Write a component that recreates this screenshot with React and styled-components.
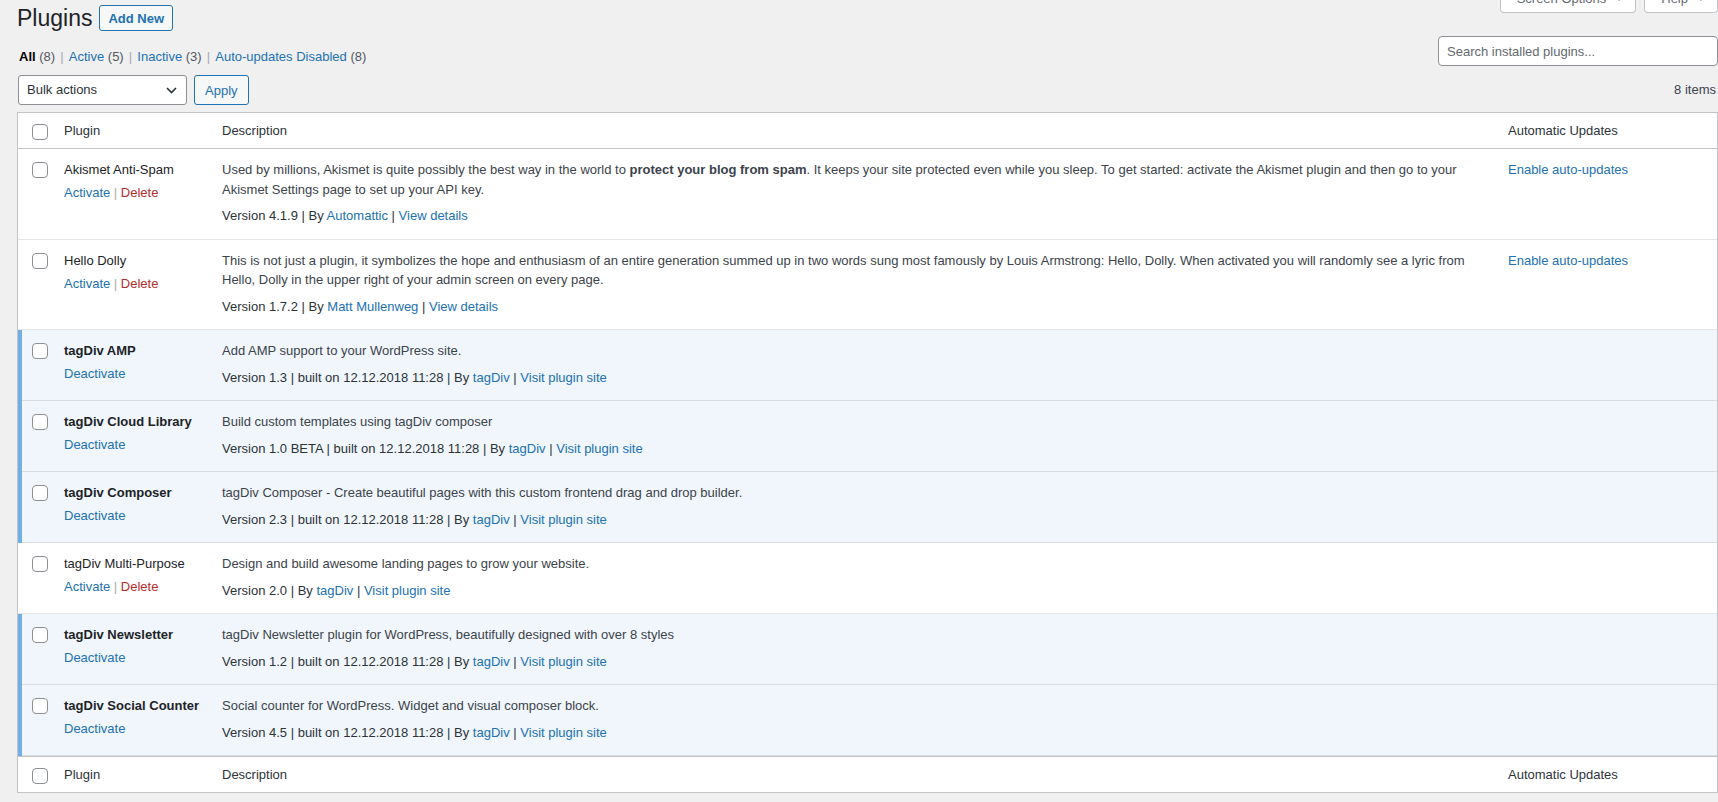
import React from 'react';
import styled, { createGlobalStyle } from 'styled-components';

const GlobalStyle = createGlobalStyle`
  html, body {
    margin: 0;
    padding: 0;
    background: #f0f0f1;
    overflow: hidden;
  }
  body {
    font-family: "Liberation Sans", Arial, sans-serif;
    font-size: 13px;
    line-height: 1.4;
    color: #3c434a;
  }
  * {
    box-sizing: border-box;
  }
`;

const Wrap = styled.div`
  padding: 5px 0 0 17px;
`;

const HeaderRow = styled.div`
  display: flex;
  align-items: center;
  height: 26px;
`;

const PageTitle = styled.h1`
  margin: 0;
  font-size: 23px;
  line-height: 26px;
  font-weight: 400;
  color: #1d2327;
`;

const OutlineButton = styled.button`
  height: ${p => p.$h || 26}px;
  padding: 0 ${p => p.$px || 8}px;
  margin-left: ${p => p.$ml || 0}px;
  border: 1px solid #2271b1;
  border-radius: 3px;
  background: #f6f7f7;
  color: #2271b1;
  font-family: inherit;
  font-size: 13px;
  font-weight: ${p => p.$bold ? 600 : 400};
  line-height: 1;
  cursor: pointer;
`;

const ScreenMeta = styled.div`
  display: flex;
  gap: 8px;
  margin-left: auto;
  align-self: flex-start;
  margin-top: -20px;
`;

const MetaButton = styled.button`
  display: flex;
  align-items: center;
  gap: 9px;
  height: 28px;
  padding: 0 12px 0 16px;
  border: 1px solid #c3c4c7;
  border-top: none;
  border-radius: 0 0 4px 4px;
  background: #fff;
  color: #646970;
  font-family: inherit;
  font-size: 13px;
`;

const FilterRow = styled.div`
  display: flex;
  justify-content: space-between;
  align-items: flex-start;
  margin-top: 5px;
`;

const SubList = styled.ul`
  display: flex;
  margin: 0;
  padding: 12px 0 0 2px;
  list-style: none;
  line-height: 18px;
  font-size: 13px;
`;

const SubItem = styled.li`
  white-space: pre;
  color: #50575e;
`;

const SubLink = styled.a`
  color: ${p => p.$current ? '#000' : '#2271b1'};
  font-weight: ${p => p.$current ? 600 : 400};
  text-decoration: none;
`;

const Sep = styled.span`
  color: #a7aaad;
  padding: 0 ${p => p.$wide ? 1.5 : 0}px;
`;

const SearchInput = styled.input`
  width: 280px;
  height: 30px;
  padding: 0 8px;
  border: 1px solid #8c8f94;
  border-radius: 4px;
  background: #fff;
  font-family: inherit;
  font-size: 13px;
  color: #2c3338;

  &::placeholder {
    color: #646970;
  }
`;

const ActionsRow = styled.div`
  display: flex;
  align-items: center;
  gap: 7px;
  margin-top: 9px;
  padding-left: 1px;
`;

const SelectBox = styled.div`
  display: flex;
  align-items: center;
  justify-content: space-between;
  width: 169px;
  height: 30px;
  padding: 0 9px 0 8px;
  border: 1px solid #8c8f94;
  border-radius: 3px;
  background: #fff;
  color: #2c3338;
  font-size: 13px;
`;

const ItemCount = styled.span`
  margin-left: auto;
  padding-right: 2px;
  color: #3c434a;
`;

const Table = styled.div`
  margin-top: 7px;
  border: 1px solid #c3c4c7;
  background: #fff;
  box-shadow: 0 1px 1px rgba(0, 0, 0, 0.04);
`;

const columns = '36px 158px 1fr 219px';

const HeadRow = styled.div`
  display: grid;
  grid-template-columns: ${columns};
  height: 36px;
  ${p => p.$foot ? 'border-top' : 'border-bottom'}: 1px solid #c3c4c7;
`;

const HeadCell = styled.div`
  padding: 0 10px;
  line-height: 35px;
  color: #2c3338;
`;

const PluginRow = styled.div`
  display: grid;
  grid-template-columns: ${columns};
  background: ${p => p.$active ? '#f0f6fc' : '#fff'};
  box-shadow: inset 0 -1px 0 rgba(0, 0, 0, 0.1);
`;

const CheckCell = styled.div`
  padding: ${p => p.$head ? 11 : 13}px 0 0 14px;
  box-shadow: ${p => p.$active ? 'inset 4px 0 0 #72aee6' : 'none'};
`;

const Checkbox = styled.input.attrs({ type: 'checkbox', readOnly: true })`
  appearance: none;
  display: block;
  width: 16px;
  height: 16px;
  margin: 0;
  border: 1px solid #8c8f94;
  border-radius: 4px;
  background: #fff;
`;

const NameCell = styled.div`
  padding: 11px 10px 0;
`;

const PluginTitle = styled.strong`
  display: block;
  line-height: 20px;
  font-weight: ${p => p.$active ? 700 : 400};
  color: #1d2327;
`;

const RowActions = styled.div`
  padding-top: 3px;
  line-height: 20px;
`;

const DescCell = styled.div`
  padding: 11px 10px 13.5px;
`;

const Desc = styled.p`
  margin: 0;
  line-height: 19.5px;
  color: #3c434a;

  strong {
    font-weight: 700;
  }
`;

const VersionLine = styled.div`
  margin-top: 7px;
  line-height: 20px;
  color: #2c3338;
`;

const AutoCell = styled.div`
  padding: 11px 10px 0;
  line-height: 20px;
`;

const Link = styled.a`
  color: ${p => p.$danger ? '#b32d2e' : '#2271b1'};
  text-decoration: none;
`;

const Caret = () => (
  <svg width="8" height="5" viewBox="0 0 8 5">
    <path d="M0 0h8L4 5z" fill="#646970" />
  </svg>
);

const Chevron = () => (
  <svg width="11" height="7" viewBox="0 0 11 7">
    <path d="M1 1l4.5 4.5L10 1" fill="none" stroke="#2c3338" strokeWidth="1.6" />
  </svg>
);

const built = '12.12.2018 11:28';

const plugins = [
  {
    name: 'Akismet Anti-Spam',
    desc: (
      <>
        Used by millions, Akismet is quite possibly the best way in the world to <strong>protect your blog from spam</strong>. It keeps your site protected even while you sleep. To get started: activate the Akismet plugin and then go to your Akismet Settings page to set up your API key.
      </>
    ),
    version: '4.1.9',
    author: 'Automattic',
    link: 'View details',
    auto: true,
  },
  {
    name: 'Hello Dolly',
    desc: 'This is not just a plugin, it symbolizes the hope and enthusiasm of an entire generation summed up in two words sung most famously by Louis Armstrong: Hello, Dolly. When activated you will randomly see a lyric from Hello, Dolly in the upper right of your admin screen on every page.',
    version: '1.7.2',
    author: 'Matt Mullenweg',
    link: 'View details',
    auto: true,
  },
  {
    name: 'tagDiv AMP',
    active: true,
    desc: 'Add AMP support to your WordPress site.',
    version: '1.3',
    built,
    author: 'tagDiv',
    link: 'Visit plugin site',
  },
  {
    name: 'tagDiv Cloud Library',
    active: true,
    desc: 'Build custom templates using tagDiv composer',
    version: '1.0 BETA',
    built,
    author: 'tagDiv',
    link: 'Visit plugin site',
  },
  {
    name: 'tagDiv Composer',
    active: true,
    desc: 'tagDiv Composer - Create beautiful pages with this custom frontend drag and drop builder.',
    version: '2.3',
    built,
    author: 'tagDiv',
    link: 'Visit plugin site',
  },
  {
    name: 'tagDiv Multi-Purpose',
    desc: 'Design and build awesome landing pages to grow your website.',
    version: '2.0',
    author: 'tagDiv',
    link: 'Visit plugin site',
  },
  {
    name: 'tagDiv Newsletter',
    active: true,
    desc: 'tagDiv Newsletter plugin for WordPress, beautifully designed with over 8 styles',
    version: '1.2',
    built,
    author: 'tagDiv',
    link: 'Visit plugin site',
  },
  {
    name: 'tagDiv Social Counter',
    active: true,
    desc: 'Social counter for WordPress. Widget and visual composer block.',
    version: '4.5',
    built,
    author: 'tagDiv',
    link: 'Visit plugin site',
  },
];

const filters = [
  { label: 'All', count: 8, current: true },
  { label: 'Active', count: 5 },
  { label: 'Inactive', count: 3 },
  { label: 'Auto-updates Disabled', count: 8 },
];

const TableHead = ({ foot }) => (
  <HeadRow $foot={foot}>
    <CheckCell $head>
      <Checkbox />
    </CheckCell>
    <HeadCell>Plugin</HeadCell>
    <HeadCell>Description</HeadCell>
    <HeadCell>Automatic Updates</HeadCell>
  </HeadRow>
);

const Plugin = ({ p }) => (
  <PluginRow $active={p.active}>
    <CheckCell $active={p.active}>
      <Checkbox />
    </CheckCell>
    <NameCell>
      <PluginTitle $active={p.active}>{p.name}</PluginTitle>
      <RowActions>
        {p.active ? (
          <Link href="#">Deactivate</Link>
        ) : (
          <>
            <Link href="#">Activate</Link>
            <Sep> | </Sep>
            <Link href="#" $danger>Delete</Link>
          </>
        )}
      </RowActions>
    </NameCell>
    <DescCell>
      <Desc>{p.desc}</Desc>
      <VersionLine>
        Version {p.version}
        {p.built && <> | built on {p.built}</>}
        {' | By '}
        <Link href="#">{p.author}</Link>
        {' | '}
        <Link href="#">{p.link}</Link>
      </VersionLine>
    </DescCell>
    <AutoCell>
      {p.auto && <Link href="#">Enable auto-updates</Link>}
    </AutoCell>
  </PluginRow>
);

const App = () => (
  <>
    <GlobalStyle />
    <Wrap>
      <HeaderRow>
        <PageTitle>Plugins</PageTitle>
        <OutlineButton $ml={7} $bold>Add New</OutlineButton>
        <ScreenMeta>
          <MetaButton>Screen Options <Caret /></MetaButton>
          <MetaButton>Help <Caret /></MetaButton>
        </ScreenMeta>
      </HeaderRow>

      <FilterRow>
        <SubList>
          {filters.map((f, i) => (
            <SubItem key={f.label}>
              <SubLink href="#" $current={f.current}>{f.label}</SubLink> ({f.count})
              {i < filters.length - 1 && <Sep $wide> | </Sep>}
            </SubItem>
          ))}
        </SubList>
        <SearchInput placeholder="Search installed plugins..." />
      </FilterRow>

      <ActionsRow>
        <SelectBox>
          Bulk actions
          <Chevron />
        </SelectBox>
        <OutlineButton $h={30} $px={10}>Apply</OutlineButton>
        <ItemCount>8 items</ItemCount>
      </ActionsRow>

      <Table>
        <TableHead />
        {plugins.map(p => (
          <Plugin key={p.name} p={p} />
        ))}
        <TableHead foot />
      </Table>
    </Wrap>
  </>
);

export default App;
